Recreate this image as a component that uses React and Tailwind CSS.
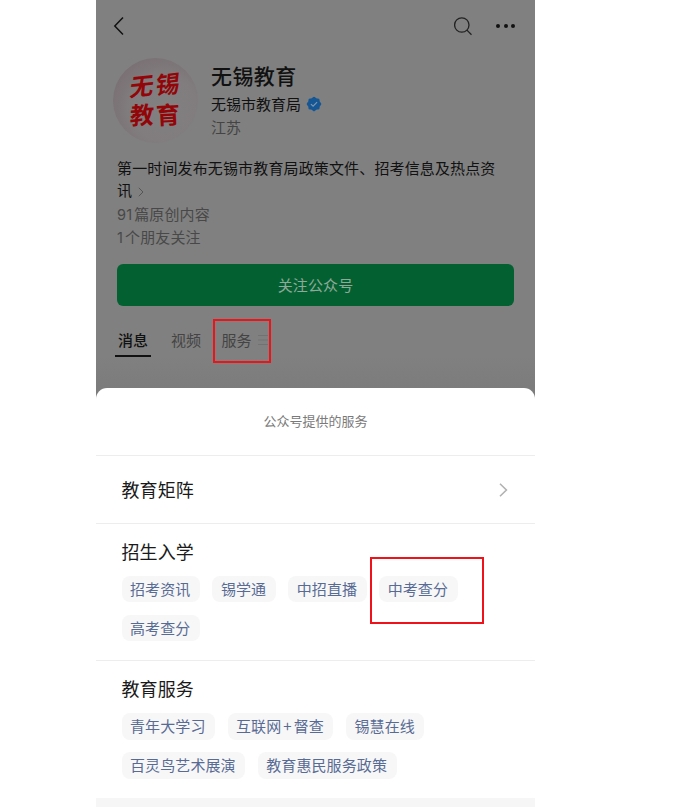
const sections = [
  {
    title: "招生入学",
    rows: [["招考资讯", "锡学通", "中招直播", "中考查分"], ["高考查分"]],
  },
  {
    title: "教育服务",
    rows: [
      ["青年大学习", "互联网+督查", "锡慧在线"],
      ["百灵鸟艺术展演", "教育惠民服务政策"],
    ],
  },
];

function VerifiedBadge() {
  return (
    <svg viewBox="0 0 16 16" className="ml-[5px] size-[16px]">
      <g fill="#155694">
        <rect x="2.4" y="2.4" width="11.2" height="11.2" rx="1.6" />
        <rect x="2.4" y="2.4" width="11.2" height="11.2" rx="1.6" transform="rotate(45 8 8)" />
      </g>
      <path d="M4.9 8.1l2.2 2.1 4-4.1" fill="none" stroke="#8096ac" strokeWidth="1.2" />
    </svg>
  );
}

function Avatar() {
  return (
    <div className="relative size-[85px] shrink-0 overflow-hidden rounded-full bg-[radial-gradient(circle_at_60%_60%,#828081_0%,#817d7e_45%,#796f72_80%,#7d7779_100%)]">
      <div className="absolute top-[12px] left-[17px] grid grid-cols-2 text-[24px] leading-[29px] font-bold text-[#920609]">
        <span className="-rotate-6 -skew-x-12">无</span>
        <span className="-mt-[2px] ml-px -rotate-6 -skew-x-12">锡</span>
        <span className="-rotate-3 -skew-x-6">教</span>
        <span className="ml-px -rotate-3">育</span>
      </div>
    </div>
  );
}

function Profile() {
  return (
    <div className="relative h-[388px] bg-[#808080] text-[#111]">
      <div className="flex h-[52px] items-center pr-[20px] pl-[17px]">
        <svg viewBox="0 0 12 20" className="h-[20px] w-[12px]" fill="none" stroke="#111" strokeWidth="1.5">
          <path d="M10 1.6L1.8 10l8.2 8.4" />
        </svg>
        <svg viewBox="0 0 20 20" className="ml-auto size-[20px]" fill="none" stroke="#222" strokeWidth="1.3">
          <circle cx="7.8" cy="9" r="7.2" />
          <path d="M12.9 14.1l4.6 4.6" />
        </svg>
        <div className="ml-[22px] flex gap-[3.5px]">
          <i className="size-1 rounded-full bg-[#111]" />
          <i className="size-1 rounded-full bg-[#111]" />
          <i className="size-1 rounded-full bg-[#111]" />
        </div>
      </div>

      <div className="flex pt-[6px] pl-[17px]">
        <Avatar />
        <div className="pl-[13px]">
          <h1 className="pt-[2px] text-[21px] leading-[30px] font-medium tracking-[0.4px]">无锡教育</h1>
          <div className="mt-[2px] flex items-center text-[15px] leading-[24px]">
            无锡市教育局
            <VerifiedBadge />
          </div>
          <div className="text-[15px] leading-[22px] text-[#444]">江苏</div>
        </div>
      </div>

      <div className="pt-[14px] pl-[21px] text-[15px] tracking-[0.14px]">
        <p className="w-[385px] leading-[22px]">
          第一时间发布无锡市教育局政策文件、招考信息及热点资讯
          <svg viewBox="0 0 6 10" className="ml-[6px] inline h-[10px] w-[6px] align-[-1px]" fill="none" stroke="#555">
            <path d="M.8.8L5 5 .8 9.2" />
          </svg>
        </p>
        <p className="h-[24px] pt-[1px] leading-[23px] text-[#484848]">
          <span className="mr-[2px] font-[Inter] text-[14.5px]">91</span>篇原创内容
        </p>
        <p className="h-[24px] leading-[24px] text-[#484848]">
          <span className="mr-[2px] font-[Inter] text-[14.5px]">1</span>个朋友关注
        </p>
      </div>

      <button className="mt-[15px] ml-[21px] flex h-[42px] w-[397px] items-center justify-center rounded-[6px] bg-[#036131] text-[15px] tracking-[0.1px] text-[#8fa899]">
        关注公众号
      </button>

      <div className="ml-[22px] flex h-[51px] items-start pt-[21px] text-[15px] leading-[26px] text-[#444]">
        <div className="relative font-medium text-[#111]">
          消息
          <span className="absolute top-[28px] -left-[3px] h-[2px] w-[36px] bg-[#111]" />
        </div>
        <div className="ml-[23px]">视频</div>
        <div className="ml-[20.5px] flex items-center">
          服务
          <svg viewBox="0 0 10 10" className="ml-[6.5px] size-[10px]" stroke="#727272">
            <path d="M0 .5h10M0 5h10M0 9.5h10" />
          </svg>
        </div>
      </div>
      <div className="h-[31px] bg-linear-to-b from-[#808080] to-[#7c7c7c]" />
      <span className="absolute top-[319px] left-[117px] h-[44px] w-[58px] border-2 border-[#ef1219]" />
    </div>
  );
}

function Tag({ children }) {
  const [head, tail] = children.split("+");
  return (
    <span className="h-[26.5px] rounded-[8px] bg-[#f7f7f7] pr-[9.5px] pl-[8.5px] text-[15px] leading-[26px] tracking-[0.1px] text-[#576b95]">
      {head}
      {tail && <span className="mx-[2px]">+</span>}
      {tail}
    </span>
  );
}

function ServiceSection({ title, rows }) {
  return (
    <section className="h-[137.5px] border-t border-[#ededed] pt-[14px] pl-[25.5px]">
      <h2 className="text-[18px] leading-[26px] tracking-[0.1px] text-[#1a1a1a]">{title}</h2>
      <div className="mt-[12px] flex flex-col gap-[12.5px]">
        {rows.map((row) => (
          <div key={row[0]} className="flex gap-[12.5px]">
            {row.map((tag) => (
              <Tag key={tag}>{tag}</Tag>
            ))}
          </div>
        ))}
      </div>
    </section>
  );
}

export default function App() {
  return (
    <div className="h-[807px] overflow-hidden bg-white font-['Noto_Sans_CJK_SC',sans-serif]">
      <div className="relative ml-[96px] h-[807px] w-[439px] overflow-hidden bg-[#7c7c7c]">
        <Profile />
        <div className="h-[419px] rounded-t-[11px] bg-white">
          <div className="flex h-[67.4px] items-center justify-center pb-px text-[13px] text-[#7a7a7a]">
            公众号提供的服务
          </div>
          <div className="flex h-[67.5px] items-center justify-between border-t border-[#ededed] pr-[27px] pl-[25.5px] text-[18px] tracking-[0.1px] text-[#1a1a1a]">
            教育矩阵
            <svg viewBox="0 0 9 14" className="h-[14px] w-[9px]" fill="none" stroke="#b2b2b2" strokeWidth="1.6">
              <path d="M1 .8L7.4 7 1 13.2" />
            </svg>
          </div>
          {sections.map((section) => (
            <ServiceSection key={section.title} {...section} />
          ))}
          <div className="h-[10px] bg-[#f6f6f6]" />
        </div>
        <span className="absolute top-[557px] left-[274px] h-[67px] w-[114px] border-2 border-[#ef1219]" />
      </div>
    </div>
  );
}
